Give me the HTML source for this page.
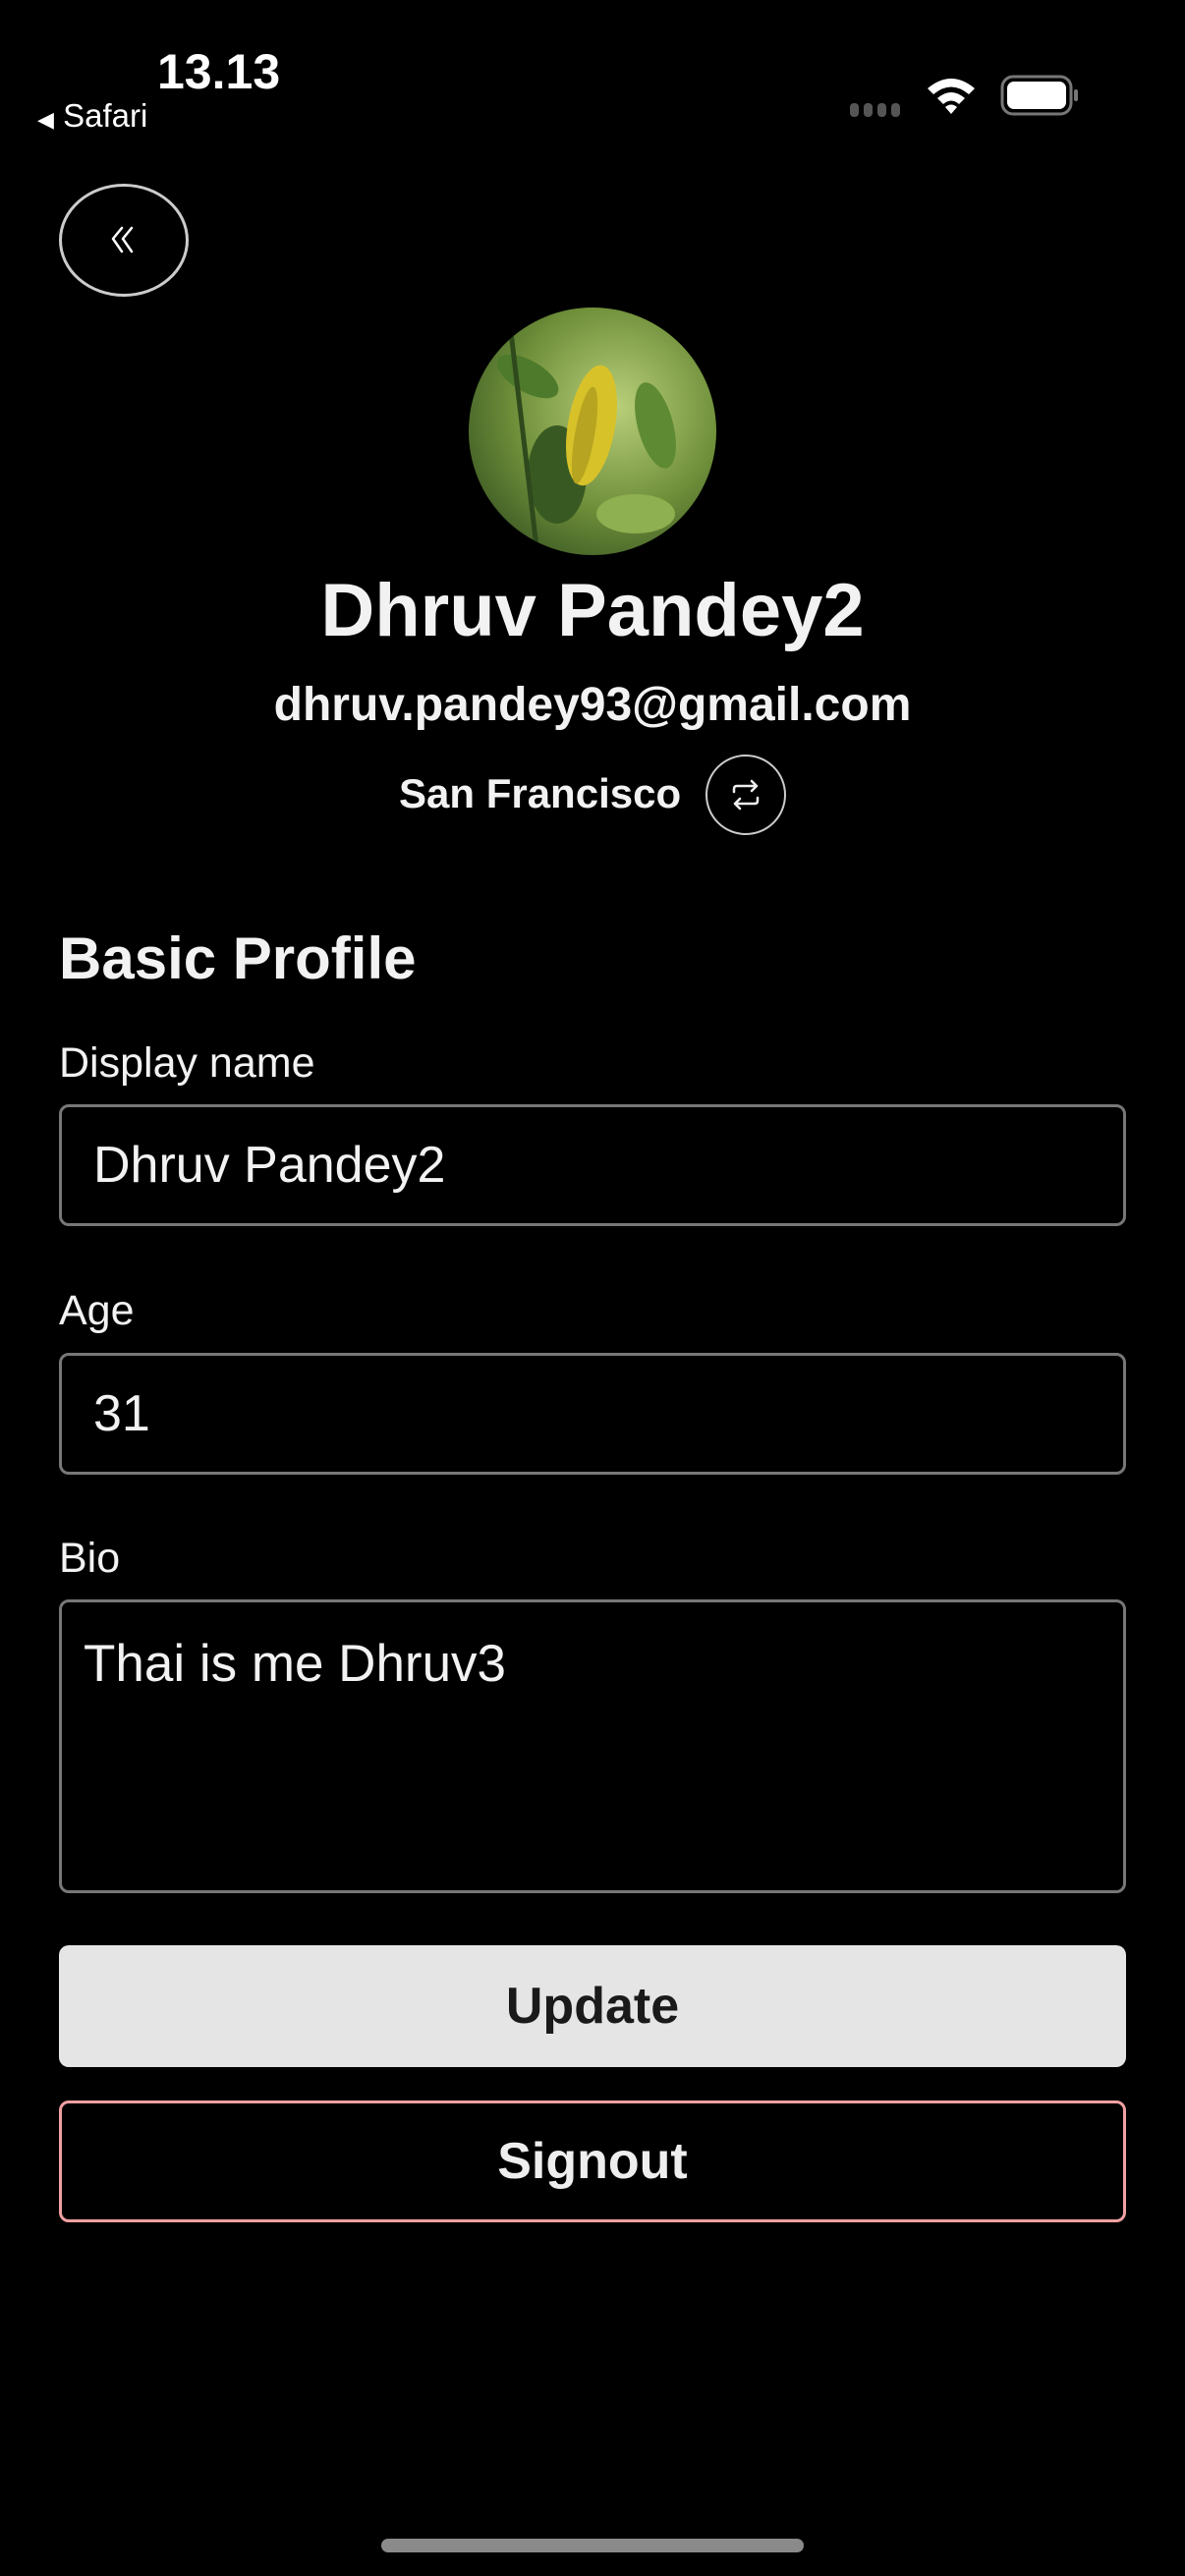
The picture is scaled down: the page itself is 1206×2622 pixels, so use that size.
<!DOCTYPE html>
<html><head><meta charset="utf-8"><style>
*{margin:0;padding:0;box-sizing:border-box}
body{width:1206px;height:2622px;background:#000;position:relative;overflow:hidden;font-family:"Liberation Sans",sans-serif;color:#f2f2f2}
.a{position:absolute;white-space:nowrap}
.c{left:0;width:1206px;text-align:center}
.box{position:absolute;left:60px;width:1086px;border:3px solid #777;border-radius:10px}
</style></head><body>
<div class="a" style="left:160px;top:48px;font-size:50px;font-weight:bold;line-height:50px;color:#fff">13.13</div>
<div class="a" style="left:38px;top:101px;font-size:33px;line-height:33px;color:#fff"><span style="font-size:22px">◀</span> Safari</div>
<svg class="a" style="left:862px;top:100px" width="240" height="30" viewBox="0 0 240 30">
<g fill="#555"><rect x="3" y="5" width="9" height="14" rx="4"/><rect x="17" y="5" width="9" height="14" rx="4"/><rect x="31" y="5" width="9" height="14" rx="4"/><rect x="45" y="5" width="9" height="14" rx="4"/></g>
</svg>
<svg class="a" style="left:940px;top:76px" width="56" height="42" viewBox="0 0 56 42">
<path d="M4 14 Q28 -6 52 14 L46 20 Q28 5 10 20Z" fill="#fff"/>
<path d="M14 24 Q28 12 42 24 L36 30 Q28 23 20 30Z" fill="#fff"/>
<path d="M22 33 Q28 28 34 33 L28 40Z" fill="#fff"/>
</svg>
<svg class="a" style="left:1018px;top:76px" width="84" height="44" viewBox="0 0 84 44">
<rect x="2" y="2" width="70" height="38" rx="11" fill="none" stroke="#777" stroke-width="3"/>
<rect x="7" y="7" width="60" height="28" rx="7" fill="#fff"/>
<rect x="75" y="15" width="4" height="12" rx="2" fill="#777"/>
</svg>
<div class="a" style="left:60px;top:187px;width:132px;height:115px;border:3px solid #ccc;border-radius:50%"></div>
<svg class="a" style="left:108px;top:226px" width="36" height="36" viewBox="0 0 36 36" fill="none" stroke="#fff" stroke-width="2.5" stroke-linecap="round" stroke-linejoin="round"><path d="M16 6 L7 17 L16 30"/><path d="M26 6 L17 17 L26 30"/></svg>
<svg class="a" style="left:477px;top:313px" width="252" height="252" viewBox="0 0 252 252">
<defs><clipPath id="cp"><circle cx="126" cy="126" r="126"/></clipPath>
<radialGradient id="g" cx="0.6" cy="0.4" r="0.7"><stop offset="0" stop-color="#b9cf7a"/><stop offset="0.6" stop-color="#6f8f3a"/><stop offset="1" stop-color="#3c5a24"/></radialGradient></defs>
<g clip-path="url(#cp)">
<rect width="252" height="252" fill="url(#g)"/>
<ellipse cx="60" cy="70" rx="35" ry="16" fill="#4e7a2c" transform="rotate(30 60 70)"/>
<ellipse cx="190" cy="120" rx="18" ry="45" fill="#5f8a34" transform="rotate(-15 190 120)"/>
<ellipse cx="90" cy="170" rx="30" ry="50" fill="#385a22"/>
<ellipse cx="170" cy="210" rx="40" ry="20" fill="#8fb050"/>
<path d="M40 0 L70 252" stroke="#2e4a1c" stroke-width="5"/>
<ellipse cx="125" cy="120" rx="24" ry="62" fill="#d8c22a" transform="rotate(10 125 120)"/>
<ellipse cx="118" cy="130" rx="10" ry="50" fill="#b7a420" transform="rotate(10 118 130)"/>
</g></svg>
<div class="a c" style="top:583px;font-size:76px;font-weight:bold;line-height:78px">Dhruv Pandey2</div>
<div class="a c" style="top:693px;font-size:48px;font-weight:bold;line-height:50px">dhruv.pandey93@gmail.com</div>
<div class="a" style="left:406px;top:785px;font-size:42px;font-weight:bold;line-height:46px">San Francisco</div>
<div class="a" style="left:718px;top:768px;width:82px;height:82px;border:2px solid #ccc;border-radius:50%"></div>
<svg class="a" style="left:739px;top:789px" width="40" height="40" viewBox="0 0 40 40" fill="none" stroke="#eee" stroke-width="2.5" stroke-linecap="round" stroke-linejoin="round">
<path d="M8 17 V14 Q8 11 11 11 H31 M26 6 L31 11 L26 16"/><path d="M32 23 V26 Q32 29 29 29 H9 M14 24 L9 29 L14 34"/></svg>
<div class="a" style="left:60px;top:945px;font-size:60px;font-weight:bold;line-height:62px">Basic Profile</div>
<div class="a" style="left:60px;top:1060px;font-size:43px;line-height:44px">Display name</div>
<div class="box" style="top:1124px;height:124px"></div>
<div class="a" style="left:95px;top:1159px;font-size:52px;line-height:54px">Dhruv Pandey2</div>
<div class="a" style="left:60px;top:1312px;font-size:43px;line-height:44px">Age</div>
<div class="box" style="top:1377px;height:124px"></div>
<div class="a" style="left:95px;top:1412px;font-size:52px;line-height:54px">31</div>
<div class="a" style="left:60px;top:1564px;font-size:43px;line-height:44px">Bio</div>
<div class="box" style="top:1628px;height:299px"></div>
<div class="a" style="left:85px;top:1667px;font-size:53px;line-height:54px">Thai is me Dhruv3</div>
<div class="a" style="left:60px;top:1980px;width:1086px;height:124px;background:#e5e5e5;border-radius:10px;color:#1a1a1a;font-size:52px;font-weight:bold;text-align:center;line-height:124px">Update</div>
<div class="a" style="left:60px;top:2138px;width:1086px;height:124px;border:3px solid #f0a0a0;border-radius:10px;color:#eee;font-size:52px;font-weight:bold;text-align:center;line-height:118px">Signout</div>
<div class="a" style="left:388px;top:2584px;width:430px;height:14px;border-radius:7px;background:#8a8a8a"></div>
</body></html>
